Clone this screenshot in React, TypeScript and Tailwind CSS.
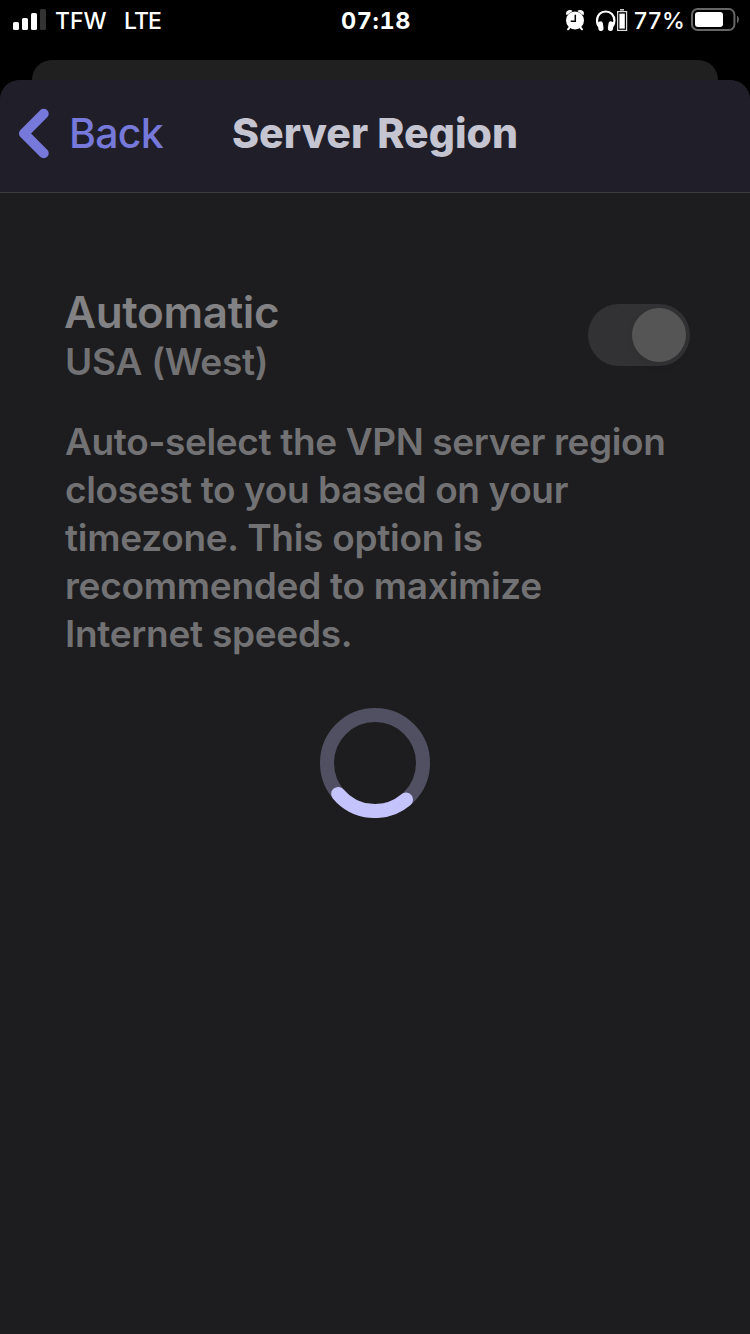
import { useState } from "react"

interface ToggleProps {
  on: boolean
  onChange: (on: boolean) => void
}

function SignalBars() {
  return (
    <svg className="h-10 w-[34px] shrink-0" viewBox="12 0 34 40" fill="#fff">
      <rect x="13" y="22" width="6" height="8" rx="1.6" />
      <rect x="22" y="18" width="6" height="12" rx="1.6" />
      <rect x="31" y="13" width="6" height="17" rx="1.6" />
      <rect x="40" y="9" width="6" height="21" rx="1.6" fill="#333" />
    </svg>
  )
}

function AlarmIcon() {
  return (
    <svg className="h-10 w-5 shrink-0" viewBox="565 0 20 40">
      <g stroke="#fff" strokeWidth="2" strokeLinecap="round">
        <path d="M570 27l-2 2.3M580 27l2 2.3" />
      </g>
      <path d="M566.6 15.2c-1-1.6-.6-3.6.9-4.5 1.7-1 4-.7 5.2.4z" fill="#fff" />
      <path d="M583.4 15.2c1-1.6.6-3.6-.9-4.5-1.7-1-4-.7-5.2.4z" fill="#fff" />
      <circle cx="575" cy="20.4" r="9" fill="#fff" />
      <path d="M575.3 14.8v6.4h-4.6" fill="none" stroke="#000" strokeWidth="1.5" />
    </svg>
  )
}

function HeadphonesIcon() {
  return (
    <svg className="h-10 w-8 shrink-0" viewBox="596 0 32 40">
      <path d="M598.6 26c-1.200-1.600-1.600-3.200-1.600-5.400 0-5.200 3.700-9.100 8.700-9.100s8.700 3.900 8.700 9.100c0 2.200-.4 3.800-1.600 5.400" fill="none" stroke="#fff" strokeWidth="2.2" />
      <rect x="598" y="21.4" width="5.2" height="9.6" rx="2.3" fill="#fff" transform="rotate(-8 600.6 26)" />
      <rect x="608.2" y="21.4" width="5.2" height="9.6" rx="2.3" fill="#fff" transform="rotate(8 610.8 26)" />
      {/* headset battery */}
      <rect x="620" y="9" width="4" height="1.6" fill="#ccc" />
      <rect x="617.6" y="11.6" width="9" height="18.8" fill="none" stroke="#ddd" strokeWidth="1.2" />
      <rect x="619.4" y="13.6" width="5.4" height="15" fill="#fff" />
    </svg>
  )
}

function BatteryIcon() {
  return (
    <svg className="h-10 w-[49px] shrink-0" viewBox="691 0 49 40">
      <rect x="692" y="9" width="42.4" height="21" rx="5.6" fill="none" stroke="#666" strokeWidth="2" />
      <rect x="695" y="12" width="28" height="15" rx="3" fill="#fff" />
      <path d="M737 15.8c2.5 1.2 2.5 6.2 0 7.4z" fill="#666" />
    </svg>
  )
}

function StatusBar() {
  return (
    <div className="flex h-10 items-center bg-black pl-3 text-[23px] leading-10 font-medium whitespace-nowrap text-white">
      <SignalBars />
      <span className="ml-[9px] w-[69px] pt-0.5">TFW</span>
      <span className="w-[217px] pt-0.5 tracking-[-0.9px]">LTE</span>
      <span className="w-[224px] pt-0.5 text-[23.5px] font-bold tracking-[0.6px] tabular-nums">07:18</span>
      <AlarmIcon />
      <span className="w-[11px]" />
      <HeadphonesIcon />
      <span className="w-[63px] pt-0.5 pl-1.5 tracking-[0.6px]">77%</span>
      <BatteryIcon />
    </div>
  )
}

function Toggle({ on, onChange }: ToggleProps) {
  return (
    <button
      role="switch"
      aria-checked={on}
      aria-label="Automatic"
      onClick={() => onChange(!on)}
      className={`flex h-[62px] w-[102px] items-center rounded-full bg-[#323234] px-1 ${on ? "justify-end" : "justify-start"}`}
    >
      <span className="size-[54px] rounded-full bg-[#555555] shadow-[0_3px_8px_rgba(0,0,0,0.06)]" />
    </button>
  )
}

function Spinner() {
  return (
    <svg className="size-[110px]" viewBox="0 0 110 110" fill="none" strokeWidth="14">
      <circle cx="55" cy="55" r="48" stroke="#505062" />
      <path d="M86 91.6A48 48 0 0 1 18.2 85.9" stroke="#c5c3fb" strokeLinecap="round" />
    </svg>
  )
}

export default function App() {
  const [automatic, setAutomatic] = useState(true)

  return (
    <div className="flex h-[1334px] w-[750px] flex-col overflow-hidden bg-black font-['Inter','Liberation_Sans',sans-serif]">
      <StatusBar />

      {/* Edge of the sheet underneath */}
      <div className="mx-8 mt-5 h-5 shrink-0 rounded-t-[20px] bg-[#202021]" />

      <div className="flex flex-1 flex-col overflow-hidden rounded-t-[20px] bg-[#1d1d1f]">
        <header className="flex h-[113px] shrink-0 border-b border-[#3d3d40] bg-[#201f29] pt-[23px]">
          <button className="flex h-[60px] w-[232px] items-center text-[#7679da]">
            <svg className="ml-4 h-[60px] w-[53px]" viewBox="16 103 53 60" fill="none" stroke="currentColor" strokeWidth="10" strokeLinecap="round" strokeLinejoin="round">
              <path d="M43.7 113.8L24 133.5l19.7 19.7" />
            </svg>
            <span className="text-[41px] leading-[60px] font-[550] tracking-[-0.7px]">Back</span>
          </button>
          <h1 className="text-[41px] leading-[60px] font-extrabold tracking-[0.05px] whitespace-nowrap text-[#c5c4d1]">Server Region</h1>
        </header>

        <main className="flex flex-col pt-[92px] pr-[60px] pl-16">
          <div className="flex items-center justify-between">
            <div className="flex flex-col whitespace-nowrap">
              <span className="text-[44px] leading-[54px] font-semibold tracking-[-0.35px] text-[#828284]">Automatic</span>
              <span className="pl-px text-[37px] leading-[46px] font-semibold tracking-[-0.25px] text-[#727274]">USA (West)</span>
            </div>
            <Toggle on={automatic} onChange={setAutomatic} />
          </div>

          <p className="mt-[33px] pl-px text-[37px] leading-[48px] font-semibold tracking-[-0.38px] whitespace-nowrap text-[#727274]">
            Auto-select the VPN server region
            <br />
            closest to you based on your
            <br />
            <span className="tracking-[-0.28px]">
              timezone. This option is
              <br />
              recommended to maximize
              <br />
              Internet speeds.
            </span>
          </p>

          <div className="mt-[50px] flex justify-center pr-1">
            <Spinner />
          </div>
        </main>
      </div>
    </div>
  )
}
